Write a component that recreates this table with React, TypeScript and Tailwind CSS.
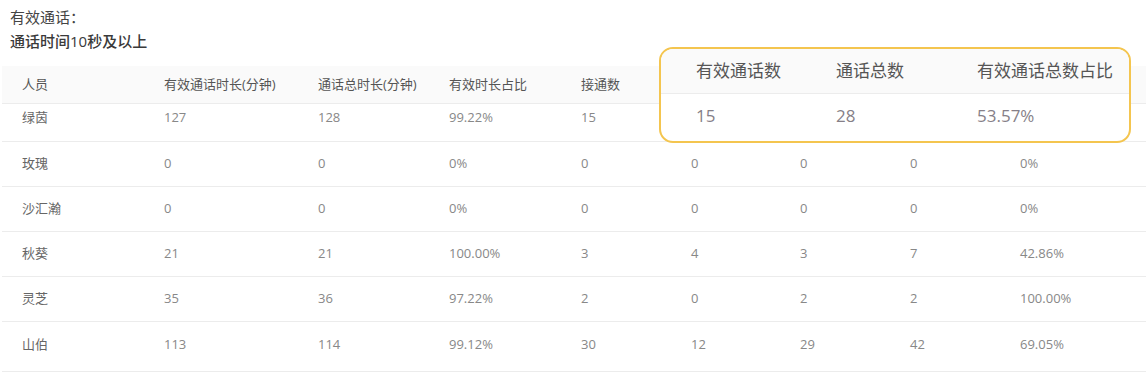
import React from "react";

const headers = ["人员", "有效通话时长(分钟)", "通话总时长(分钟)", "有效时长占比", "接通数", "", "", "", ""];
const rows: string[][] = [
  ["绿茵", "127", "128", "99.22%", "15", "", "", "", ""],
  ["玫瑰", "0", "0", "0%", "0", "0", "0", "0", "0%"],
  ["沙汇瀚", "0", "0", "0%", "0", "0", "0", "0", "0%"],
  ["秋葵", "21", "21", "100.00%", "3", "4", "3", "7", "42.86%"],
  ["灵芝", "35", "36", "97.22%", "2", "0", "2", "2", "100.00%"],
  ["山伯", "113", "114", "99.12%", "30", "12", "29", "42", "69.05%"],
];

const font = { fontFamily: '"Open Sans", "Noto Sans CJK SC", sans-serif' };

export default function App() {
  const gridCols = "grid grid-cols-[142px_154px_131px_132px_110px_109px_110px_110px_146px]";
  return (
    <div className="relative w-[1146px] h-[384px] bg-white overflow-hidden" style={font}>
      <div className="pl-[10px] pt-[5px] text-[15px] leading-[24px]">
        <div className="text-[#444]">有效通话：</div>
        <div className="text-[#3a3a3a] font-medium">通话时间10秒及以上</div>
      </div>
      <div className="ml-[2px] mt-[13px] text-[13px]">
        <div className={`${gridCols} h-[38px] bg-[#fafafa] border-b border-[#ececec] items-center text-[#555]`}>
          {headers.map((h, i) => (
            <div key={i} className="pl-[20px] whitespace-nowrap">{h}</div>
          ))}
        </div>
        {rows.map((r, ri) => (
          <div
            key={ri}
            className={`${gridCols} border-b border-[#ececec] items-center text-[#888] ${
              ri === 0 ? "h-[38px] pb-[10px]" : ri === rows.length - 1 ? "h-[50px] pb-[4px]" : "h-[45px]"
            }`}
          >
            {r.map((c, ci) => (
              <div key={ci} className={`pl-[20px] whitespace-nowrap ${ci === 0 ? "text-[#666]" : ""}`}>{c}</div>
            ))}
          </div>
        ))}
      </div>

      <div className="absolute left-[659px] top-[47px] w-[472px] h-[96px] rounded-[14px] border-2 border-[#f4c54f] bg-white overflow-hidden text-[17px]">
        <div className="grid grid-cols-[140px_141px_1fr] h-[45px] bg-[#fafafa] border-b border-[#ececec] items-center pl-[35px] text-[#555]">
          <div className="whitespace-nowrap">有效通话数</div>
          <div className="whitespace-nowrap">通话总数</div>
          <div className="whitespace-nowrap">有效通话总数占比</div>
        </div>
        <div className="grid grid-cols-[140px_141px_1fr] pl-[35px] pt-[9px] text-[#867f88]">
          <div>15</div>
          <div>28</div>
          <div>53.57%</div>
        </div>
      </div>
    </div>
  );
}
